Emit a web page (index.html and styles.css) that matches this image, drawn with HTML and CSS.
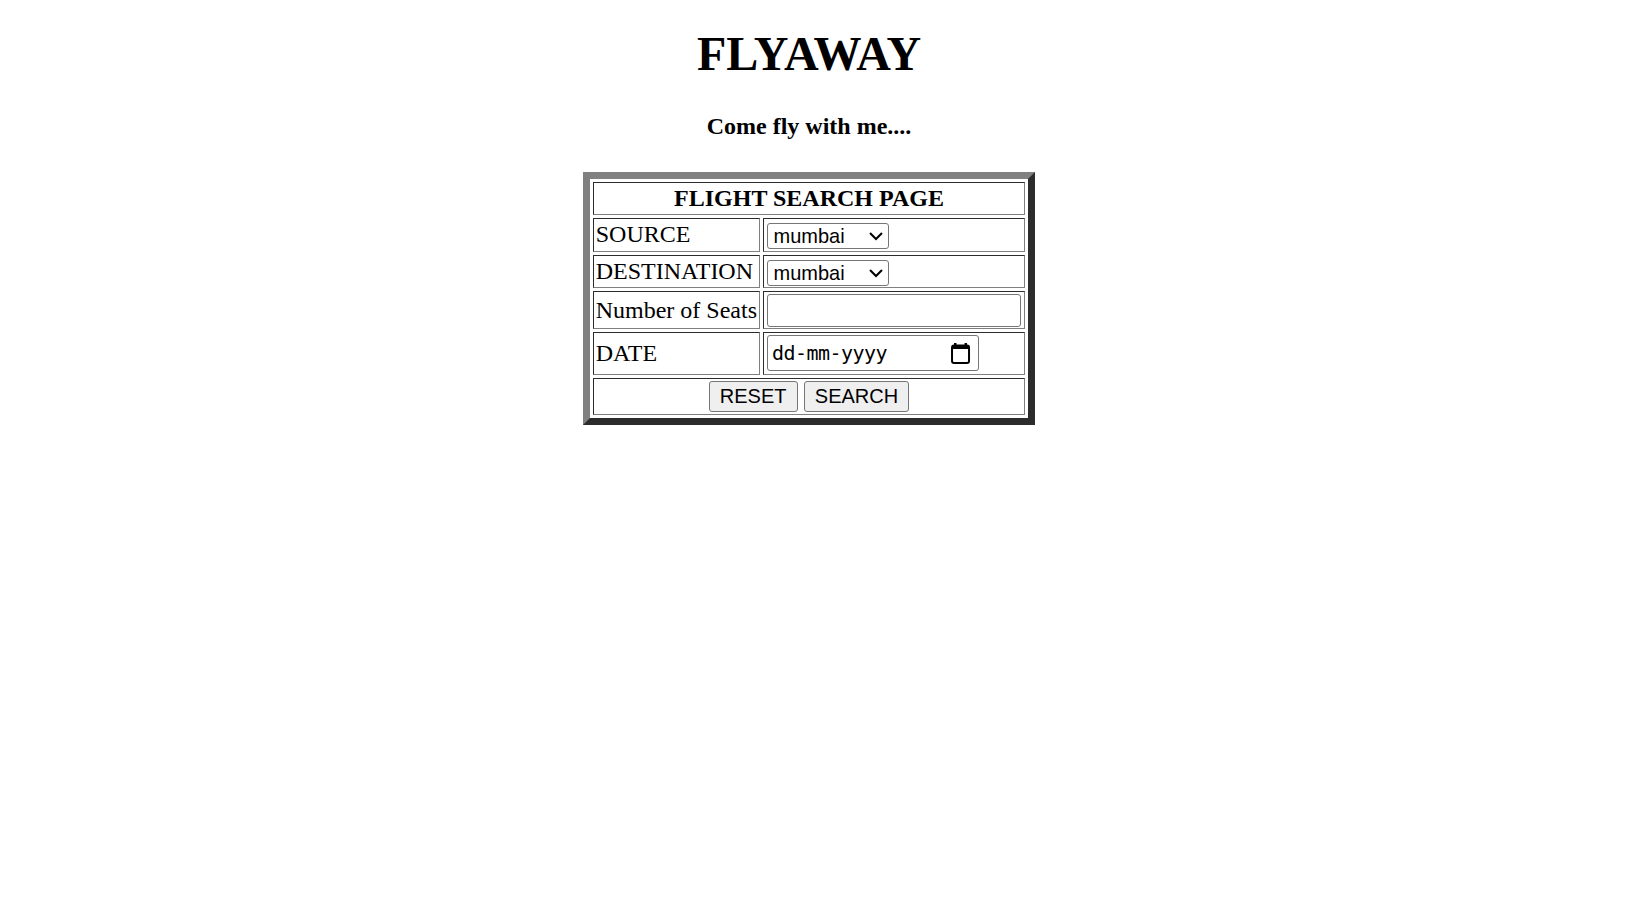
FILE: index.html
```html
<!DOCTYPE html>
<html>
<head>
<meta charset="utf-8">
<title>FLYAWAY</title>
<link rel="stylesheet" href="styles.css">
</head>
<body class="page">
<h1 class="title">FLYAWAY</h1>
<h4 class="tagline">Come fly with me....</h4>
<form class="search-form">
<table class="search-table">
<tr class="row-text"><th class="cell head" colspan="2">FLIGHT SEARCH PAGE</th></tr>
<tr class="row-text"><td class="cell">SOURCE</td><td class="cell"><select class="ctl pick"><option>mumbai</option><option>delhi</option></select></td></tr>
<tr class="row-text"><td class="cell">DESTINATION</td><td class="cell"><select class="ctl pick"><option>mumbai</option><option>delhi</option></select></td></tr>
<tr class="row-field"><td class="cell">Number of Seats</td><td class="cell"><input class="ctl seats" type="number"></td></tr>
<tr class="row-date"><td class="cell">DATE</td><td class="cell"><span class="date-wrap"><input class="ctl date-input" type="text" placeholder="dd-mm-yyyy"><svg class="cal-icon" viewBox="0 0 19 21" aria-hidden="true"><rect x="1" y="2.5" width="17" height="17.5" rx="2" fill="none" stroke="#000" stroke-width="2"/><rect x="1" y="2.5" width="17" height="3.5" fill="#000"/><rect x="3" y="0" width="2.5" height="3" fill="#000"/><rect x="13.5" y="0" width="2.5" height="3" fill="#000"/></svg></span></td></tr>
<tr class="row-field"><td class="cell actions" colspan="2"><input class="btn" type="reset" value="RESET"> <input class="btn" type="submit" value="SEARCH"></td></tr>
</table>
</form>
</body>
</html>
```
FILE: styles.css
```css
html {
  zoom: 1.5;
}
.page {
  margin: 0;
  padding: 17.33px 26px 8px 8px;
  font-family: "Liberation Serif", "Times New Roman", serif;
  color: #000;
  background: #fff;
}
.title {
  text-align: center;
  font-size: 32px;
  font-weight: bold;
  margin: 0 0 21.44px;
}
.tagline {
  text-align: center;
  font-size: 16px;
  font-weight: bold;
  margin: 21.28px 0;
}
.search-form {
  margin: 0;
}
.search-table {
  margin: 0 auto;
  border: 5px outset gray;
  border-spacing: 2px;
  border-collapse: separate;
}
.row-text {
  height: 22.3px;
}
.row-field {
  height: 25.2px;
}
.row-date {
  height: 28.3px;
}
.cell {
  border: 1px inset gray;
  padding: 1px;
  font-size: 16px;
  line-height: 1.15;
  vertical-align: middle;
}
.head {
  text-align: center;
  font-weight: bold;
}
.actions {
  text-align: center;
}
.ctl {
  font-family: "Liberation Sans", Arial, sans-serif;
  font-size: 13.33px;
  line-height: normal;
  color: #000;
  vertical-align: middle;
  box-sizing: border-box;
  margin: 0 1px;
}
.pick {
  width: 81.8px;
  height: 17.33px;
  border: 1px solid #767676;
  border-radius: 2px;
  background: #fff;
}
.seats {
  width: 169.5px;
  height: 21.6px;
  border: 1px solid #767676;
  border-radius: 2px;
  padding: 1px 2px;
  background: #fff;
}
.date-wrap {
  position: relative;
  display: inline-block;
  vertical-align: middle;
  width: 141.8px;
  height: 24px;
  margin: 0 1px;
}
.date-input {
  width: 100%;
  height: 100%;
  margin: 0;
  border: 1px solid #767676;
  border-radius: 2px;
  padding: 1px 3px;
  font-family: "DejaVu Sans Mono", "Liberation Mono", monospace;
  letter-spacing: -0.35px;
  background: #fff;
}
.date-input::placeholder {
  color: #000;
  opacity: 1;
}
.cal-icon {
  position: absolute;
  right: 5.8px;
  top: 5px;
  width: 12.7px;
  height: 14px;
}
.btn {
  font-family: "Liberation Sans", Arial, sans-serif;
  font-size: 13.33px;
  line-height: normal;
  color: #000;
  vertical-align: middle;
  height: 20.4px;
  padding: 1px 6.8px;
  border: 1px solid #767676;
  border-radius: 2px;
  background: #efefef;
  margin: 0;
}
```
